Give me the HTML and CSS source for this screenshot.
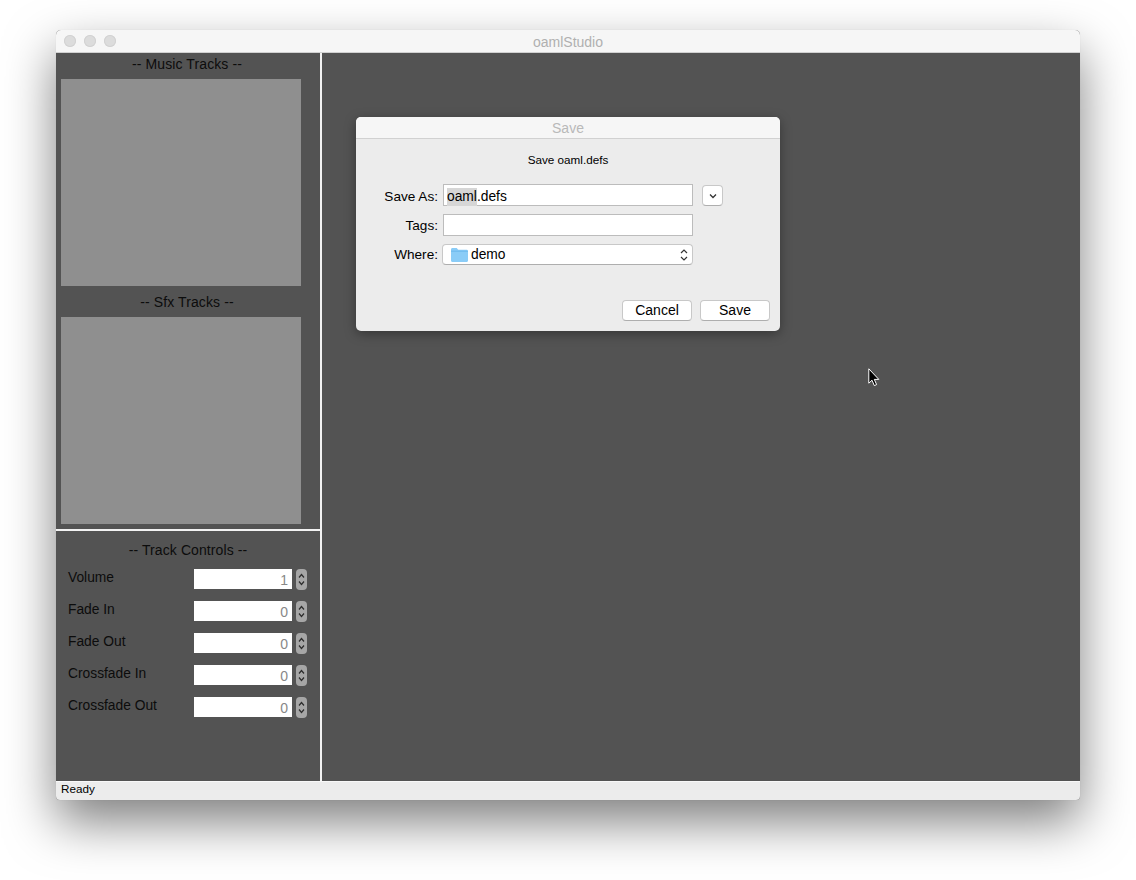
FILE: index.html
```html
<!DOCTYPE html>
<html lang="en">
<head>
    <meta charset="UTF-8">
    <title>oamlStudio</title>
    <link rel="stylesheet" href="styles.css">
</head>
<body>
    <div class="window">
        <div class="titlebar">
            <div class="lights">
                <span class="light"></span>
                <span class="light"></span>
                <span class="light"></span>
            </div>
            <div class="window-title">oamlStudio</div>
        </div>
        <div class="content">
            <div class="sidebar">
                <div class="tracks">
                    <div class="section-title">-- Music Tracks --</div>
                    <div class="track-list"></div>
                    <div class="section-title sfx-title">-- Sfx Tracks --</div>
                    <div class="track-list"></div>
                </div>
                <div class="controls">
                    <div class="section-title controls-title">-- Track Controls --</div>
                    <div class="control-row">
                        <span class="control-label">Volume</span>
                        <span class="spin-input">1</span>
                        <svg class="stepper" viewBox="0 0 11 21"><rect width="11" height="21" rx="4" fill="#a6a6a6"/><path d="M3 8.5 5.5 5.5 8 8.5M3 12.5 5.5 15.5 8 12.5" fill="none" stroke="#2c2c2c" stroke-width="1.2"/></svg>
                    </div>
                    <div class="control-row">
                        <span class="control-label">Fade In</span>
                        <span class="spin-input">0</span>
                        <svg class="stepper" viewBox="0 0 11 21"><rect width="11" height="21" rx="4" fill="#a6a6a6"/><path d="M3 8.5 5.5 5.5 8 8.5M3 12.5 5.5 15.5 8 12.5" fill="none" stroke="#2c2c2c" stroke-width="1.2"/></svg>
                    </div>
                    <div class="control-row">
                        <span class="control-label">Fade Out</span>
                        <span class="spin-input">0</span>
                        <svg class="stepper" viewBox="0 0 11 21"><rect width="11" height="21" rx="4" fill="#a6a6a6"/><path d="M3 8.5 5.5 5.5 8 8.5M3 12.5 5.5 15.5 8 12.5" fill="none" stroke="#2c2c2c" stroke-width="1.2"/></svg>
                    </div>
                    <div class="control-row">
                        <span class="control-label">Crossfade In</span>
                        <span class="spin-input">0</span>
                        <svg class="stepper" viewBox="0 0 11 21"><rect width="11" height="21" rx="4" fill="#a6a6a6"/><path d="M3 8.5 5.5 5.5 8 8.5M3 12.5 5.5 15.5 8 12.5" fill="none" stroke="#2c2c2c" stroke-width="1.2"/></svg>
                    </div>
                    <div class="control-row">
                        <span class="control-label">Crossfade Out</span>
                        <span class="spin-input">0</span>
                        <svg class="stepper" viewBox="0 0 11 21"><rect width="11" height="21" rx="4" fill="#a6a6a6"/><path d="M3 8.5 5.5 5.5 8 8.5M3 12.5 5.5 15.5 8 12.5" fill="none" stroke="#2c2c2c" stroke-width="1.2"/></svg>
                    </div>
                </div>
            </div>
            <div class="main-area"></div>
        </div>
        <div class="statusbar">Ready</div>
    </div>

    <div class="dialog">
        <div class="dialog-title">Save</div>
        <div class="dialog-body">
            <div class="dialog-message">Save oaml.defs</div>
            <div class="form">
                <div class="form-label name-label">Save As:</div>
                <div class="field"><span class="selected">oaml</span>.defs</div>
                <div class="expand-button">
                    <svg width="8" height="6" viewBox="0 0 8 6"><path d="M1 1.5 4 4.5 7 1.5" fill="none" stroke="#333" stroke-width="1.3"/></svg>
                </div>
                <div class="form-label">Tags:</div>
                <div class="field"></div>
                <div></div>
                <div class="form-label where-label">Where:</div>
                <div class="popup">
                    <svg class="folder" width="17" height="14" viewBox="0 0 17 14"><path d="M0 1.5C0 .6.6 0 1.5 0h4.2L7.2 1.7H15.5c.9 0 1.5.6 1.5 1.5V12.5c0 .9-.6 1.5-1.5 1.5h-14C.6 14 0 13.4 0 12.5Z" fill="#8accf7"/><path d="M0 3.2H17" stroke="#63b4ea" stroke-width=".8"/></svg>
                    <span class="popup-text">demo</span>
                    <svg class="popup-arrows" width="8" height="12" viewBox="0 0 8 12"><path d="M1 4 4 1 7 4M1 8 4 11 7 8" fill="none" stroke="#333" stroke-width="1.2"/></svg>
                </div>
            </div>
            <div class="dialog-buttons">
                <div class="push-button">Cancel</div>
                <div class="push-button">Save</div>
            </div>
        </div>
    </div>

    <svg class="cursor" width="12" height="19" viewBox="0 0 12 19"><path d="M.8.8V15.2L4 12.2 6.3 17.6 8.6 16.6 6.3 11.4H10.8Z" fill="#000" stroke="#fff" stroke-width="1"/></svg>
</body>
</html>
```

FILE: styles.css
```css
html, body {
    margin: 0;
    height: 880px;
    overflow: hidden;
    background-color: #fff;
    font-family: "Liberation Sans", Arial, sans-serif;
    font-size: 14px;
    color: #000;
}

/* main window */
.window {
    position: absolute;
    left: 56px;
    top: 30px;
    width: 1024px;
    height: 770px;
    display: flex;
    flex-direction: column;
    border-radius: 5px 5px 4px 4px;
    background-color: #535353;
    box-shadow: 0 22px 50px rgba(0, 0, 0, 0.5), 0 0 1px rgba(0, 0, 0, 0.15);
}

.titlebar {
    height: 22px;
    flex: none;
    display: flex;
    align-items: center;
    position: relative;
    background-color: #f6f6f6;
    border-bottom: 1px solid #d1d1d1;
    border-radius: 5px 5px 0 0;
}

.lights {
    display: flex;
    gap: 8px;
    padding-left: 8px;
}

.light {
    width: 12px;
    height: 12px;
    border-radius: 50%;
    background-color: #dcdcdc;
    box-shadow: inset 0 0 0 1px #d2d2d2;
}

.window-title {
    position: absolute;
    left: 0;
    right: 0;
    top: 4px;
    line-height: 17px;
    text-align: center;
    color: #b0b0b0;
}

.content {
    flex: 1;
    display: flex;
    min-height: 0;
}

.sidebar {
    width: 264px;
    flex: none;
    display: flex;
    flex-direction: column;
}

.tracks {
    height: 476px;
    flex: none;
    padding-left: 5px;
    box-sizing: border-box;
}

.section-title {
    width: 252px;
    height: 26px;
    line-height: 23px;
    text-align: center;
    letter-spacing: 0.1px;
    color: #0c0c0c;
}

.sfx-title {
    height: 31px;
    line-height: 33px;
}

.track-list {
    width: 240px;
    height: 207px;
    background-color: #8f8f8f;
}

.controls {
    flex: 1;
    border-top: 2px solid #f2f2f2;
    padding-left: 12px;
}

.controls-title {
    width: 240px;
    height: 38px;
    line-height: 39px;
}

.control-row {
    display: flex;
    align-items: flex-start;
    height: 21px;
    margin-bottom: 11px;
}

.control-label {
    width: 126px;
    line-height: 17px;
    font-size: 13.8px;
    color: #0c0c0c;
}

.spin-input {
    width: 94px;
    height: 20px;
    padding-right: 4px;
    line-height: 23px;
    text-align: right;
    background-color: #fff;
    color: #888;
}

.stepper {
    width: 11px;
    height: 21px;
    margin-left: 4px;
}

.main-area {
    flex: 1;
    border-left: 2px solid #f2f2f2;
}

.statusbar {
    height: 19px;
    flex: none;
    padding-left: 5px;
    line-height: 14px;
    font-size: 11.7px;
    background-color: #ececec;
    border-top: 1px solid #f8f8f8;
    border-radius: 0 0 4px 4px;
    box-sizing: border-box;
}

/* save sheet */
.dialog {
    position: absolute;
    left: 356px;
    top: 117px;
    width: 424px;
    height: 214px;
    display: flex;
    flex-direction: column;
    border-radius: 5px;
    background-color: #ececec;
    box-shadow: 0 3px 12px rgba(0, 0, 0, 0.35);
}

.dialog-title {
    height: 21px;
    flex: none;
    line-height: 23px;
    text-align: center;
    color: #b9b9b9;
    background-color: #f6f6f6;
    border-bottom: 1px solid #d1d1d1;
    border-radius: 5px 5px 0 0;
}

.dialog-body {
    flex: 1;
    display: flex;
    flex-direction: column;
}

.dialog-message {
    height: 45px;
    line-height: 42px;
    text-align: center;
    font-size: 11.7px;
}

.form {
    display: grid;
    grid-template-columns: 82px 250px 21px;
    grid-template-rows: 22px 22px 21px;
    row-gap: 8px;
    column-gap: 5px;
}

.form-label {
    text-align: right;
    line-height: 23px;
    font-size: 13.6px;
}

.name-label {
    line-height: 25px;
}

.where-label {
    line-height: 21px;
}

.field {
    width: 250px;
    height: 22px;
    box-sizing: border-box;
    padding-left: 3px;
    line-height: 23px;
    background-color: #fff;
    border: 1px solid #bcbcbc;
    font-size: 13.8px;
}

.selected {
    display: inline-block;
    line-height: 18px;
    background-color: #d6d6d6;
}

.expand-button {
    width: 21px;
    height: 21px;
    margin-left: 4px;
    margin-top: 1px;
    display: flex;
    align-items: center;
    justify-content: center;
    box-sizing: border-box;
    background-color: #fff;
    border: 1px solid #c8c8c8;
    border-bottom-color: #aeaeae;
    border-radius: 4px;
}

.popup {
    width: 251px;
    height: 21px;
    margin-left: -1px;
    display: flex;
    align-items: center;
    box-sizing: border-box;
    padding: 0 4px 0 8px;
    background-color: #fff;
    border: 1px solid #c8c8c8;
    border-bottom-color: #aeaeae;
    border-radius: 4px;
}

.popup-text {
    flex: 1;
    margin-left: 3px;
    margin-bottom: 1px;
    font-size: 13.8px;
}

.dialog-buttons {
    display: flex;
    justify-content: flex-end;
    gap: 8px;
    padding-right: 10px;
    margin-top: 35px;
}

.push-button {
    width: 70px;
    height: 21px;
    box-sizing: border-box;
    line-height: 18px;
    text-align: center;
    background-color: #fff;
    border: 1px solid #c8c8c8;
    border-bottom-color: #aeaeae;
    border-radius: 4px;
}

.cursor {
    position: absolute;
    left: 868px;
    top: 368px;
}
```
